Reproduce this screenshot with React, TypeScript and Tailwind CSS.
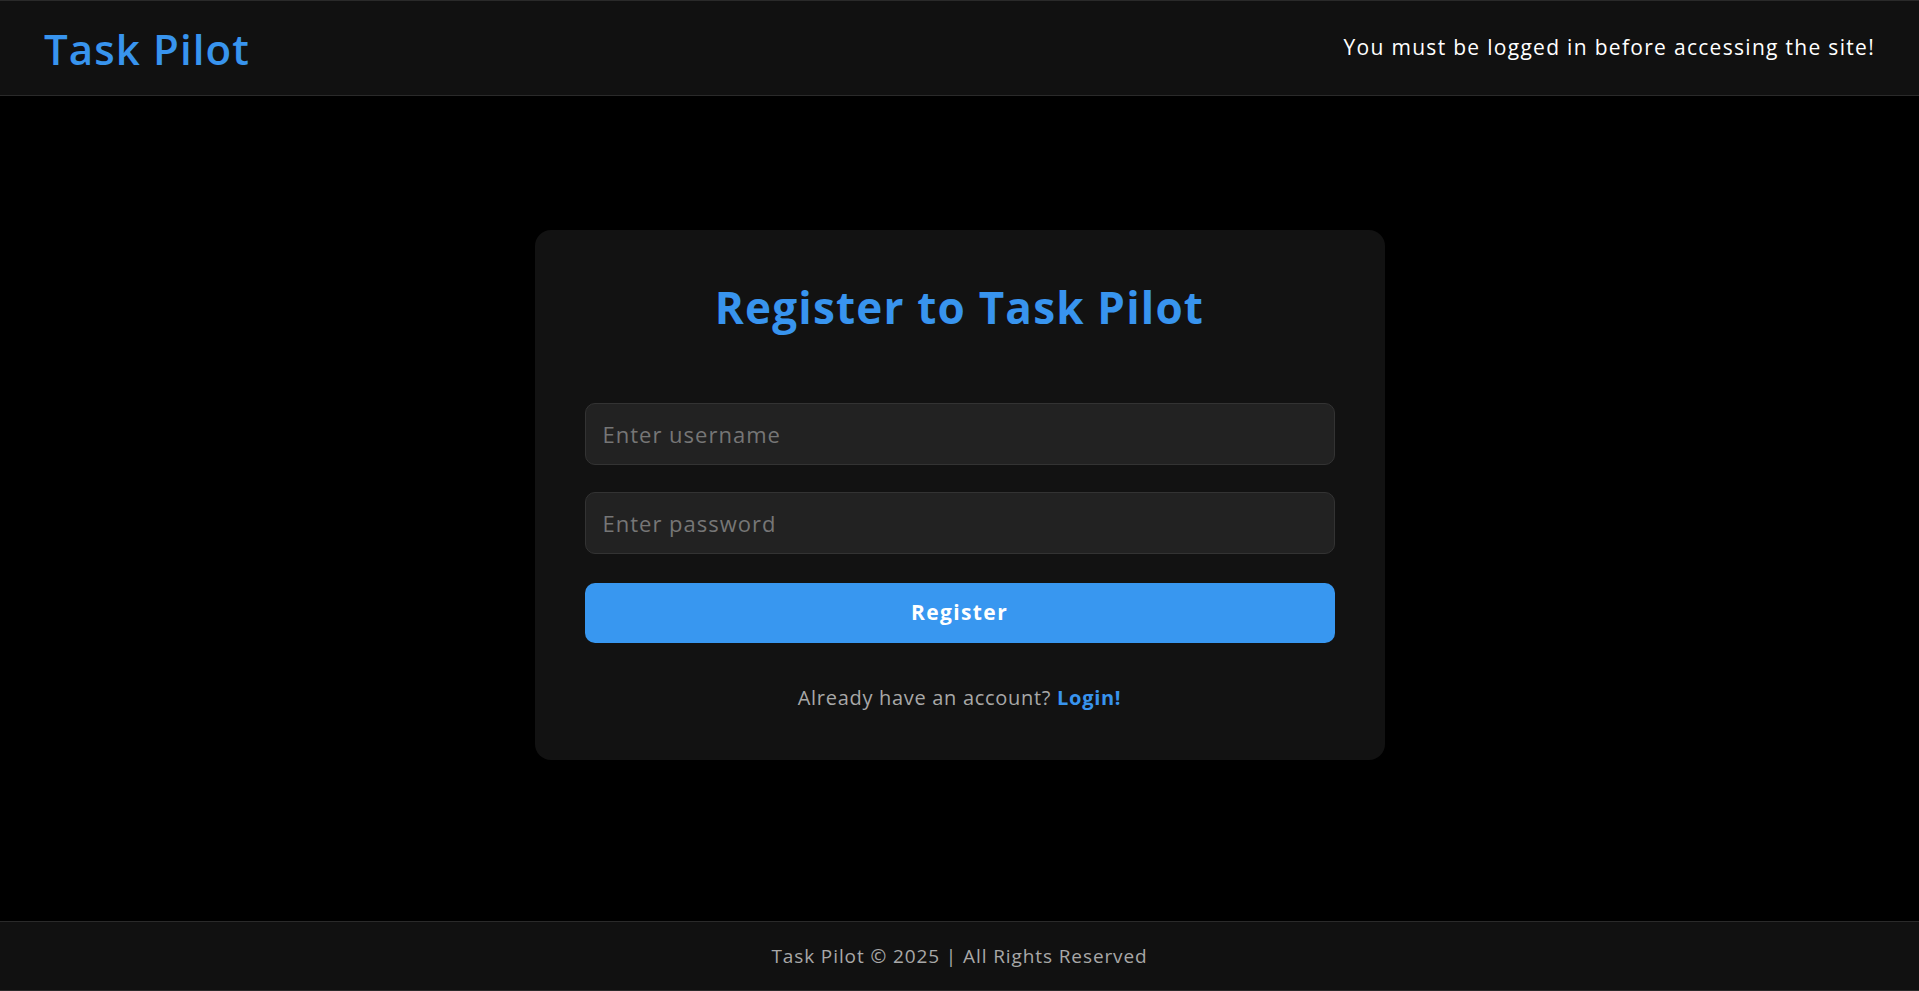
import { useState } from "react";

const font = { fontFamily: '"Open Sans", "Noto Sans", sans-serif' };

const Header = () => {
  return (
    <header className="h-[96px] shrink-0 bg-[#111111] border-y border-[#2a2a2a] flex items-center justify-between px-11">
      <h1 className="text-[42px] font-semibold text-[#3894ee] tracking-[1.1px]">Task Pilot</h1>
      <p className="text-[21px] text-white tracking-[1.3px]">You must be logged in before accessing the site!</p>
    </header>
  );
};

const Footer = () => {
  return (
    <footer className="h-[70px] shrink-0 bg-[#111111] border-y border-[#2a2a2a] flex items-center justify-center">
      <p className="text-[19px] text-[#a8a8a8] tracking-[0.9px]">Task Pilot © 2025 | All Rights Reserved</p>
    </footer>
  );
};

const RegisterCard = () => {
  const [username, setUsername] = useState("");
  const [password, setPassword] = useState("");

  return (
    <div className="w-[850px] bg-[#121212] rounded-2xl p-[50px] flex flex-col">
      <h2 className="text-[44px] leading-[54px] font-bold text-[#3894ee] text-center tracking-[1.2px]">Register to Task Pilot</h2>
      <form className="flex flex-col mt-[69px]" onSubmit={(e) => e.preventDefault()}>
        <input
          value={username}
          onChange={(e) => setUsername(e.target.value)}
          placeholder="Enter username"
          className="h-[62px] w-full bg-[#222222] border border-[#333333] rounded-[10px] px-[17px] text-[22px] tracking-[1px] text-white placeholder:text-[#767676] outline-none"
          style={font}
        />
        <input
          type="password"
          value={password}
          onChange={(e) => setPassword(e.target.value)}
          placeholder="Enter password"
          className="h-[62px] w-full bg-[#222222] border border-[#333333] rounded-[10px] px-[17px] text-[22px] tracking-[1px] text-white placeholder:text-[#767676] outline-none mt-[27px]"
          style={font}
        />
        <button
          type="submit"
          className="h-[60px] w-full bg-[#3897f0] rounded-[10px] text-white text-[21px] font-bold tracking-[1.4px] mt-[29px]"
          style={font}
        >
          Register
        </button>
      </form>
      <p className="text-[20px] leading-[24px] text-[#a8a8a8] text-center mt-[43px] tracking-[0.7px]">
        Already have an account? <a href="#" className="font-bold text-[#3894ee]">Login!</a>
      </p>
    </div>
  );
};

const App = () => {
  return (
    <div className="min-h-screen bg-black flex flex-col" style={font}>
      <Header />
      <main className="flex-1 flex justify-center items-center pb-7">
        <RegisterCard />
      </main>
      <Footer />
    </div>
  );
};

export default App;
